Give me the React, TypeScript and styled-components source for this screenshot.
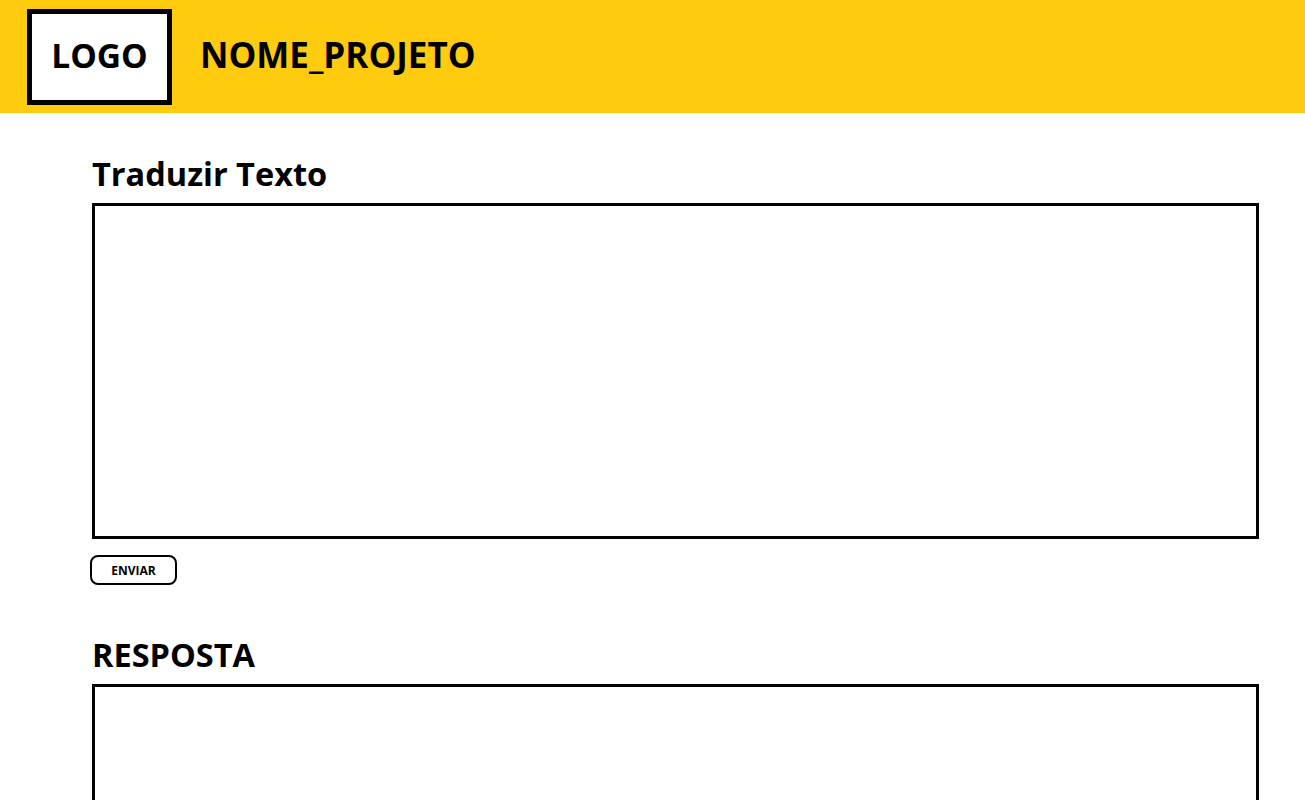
import React from "react";
import styled, {createGlobalStyle} from "styled-components";

const GlobalStyle = createGlobalStyle`
    html, body {
        margin: 0;
        padding: 0;
        background: #ffffff;
        font-family: "Open Sans", sans-serif;
    }
`;

const Header = styled.header`
    height: 113px;
    background-color: #fecb0f;
    display: flex;
    align-items: center;
    padding-left: 27px;
    gap: 28px;
`;

const LogoBox = styled.div`
    box-sizing: border-box;
    width: 145px;
    height: 96px;
    border: 5px solid #000;
    background: #fff;
    display: flex;
    align-items: center;
    justify-content: center;
    padding-bottom: 4px;
    font-weight: 700;
    font-size: 33.5px;
    color: #000;
`;

const ProjectName = styled.div`
    margin-bottom: 4px;
    font-weight: 700;
    font-size: 35px;
    color: #000;
`;

const Main = styled.main`
    padding: 0 46px 0 92px;
    display: flex;
    flex-direction: column;
    align-items: flex-start;
`;

const SectionTitle = styled.h2<{ $top: number }>`
    margin: ${p => p.$top}px 0 9px 0;
    font-size: 32.5px;
    line-height: 40px;
    font-weight: 700;
    color: #000;
`;

const TextBox = styled.textarea<{ $height: number }>`
    box-sizing: border-box;
    width: 100%;
    height: ${p => p.$height}px;
    border: 3px solid #000;
    resize: none;
    outline: none;
    display: block;
`;

const SendButton = styled.button`
    box-sizing: border-box;
    margin-top: 16px;
    margin-left: -2px;
    width: 87px;
    height: 30px;
    border: 2px solid #000;
    border-radius: 8px;
    background: #fff;
    font-family: inherit;
    font-weight: 700;
    font-size: 12px;
    color: #000;
    padding: 0;
`;

function App() {
    return (
        <>
            <GlobalStyle/>
            <Header>
                <LogoBox>LOGO</LogoBox>
                <ProjectName>NOME_PROJETO</ProjectName>
            </Header>
            <Main>
                <SectionTitle $top={41}>Traduzir Texto</SectionTitle>
                <TextBox $height={336}/>
                <SendButton>ENVIAR</SendButton>
                <SectionTitle $top={50}>RESPOSTA</SectionTitle>
                <TextBox $height={200}/>
            </Main>
        </>
    );
}

export default App;
